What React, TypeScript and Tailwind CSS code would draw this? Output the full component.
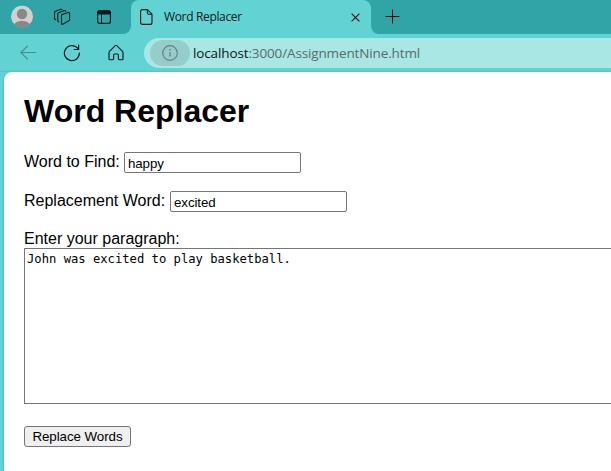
import React from "react";

function TabStrip() {
  return (
    <header className="flex h-[34px] bg-[#31a4a8]">
      <div className="flex w-[131px] shrink-0 items-start pl-[11px] pt-[5px]">
        <svg width="23" height="23" viewBox="0 0 23 23" fill="none">
          <defs>
            <clipPath id="avatar"><circle cx="11" cy="11.5" r="11" /></clipPath>
          </defs>
          <g clipPath="url(#avatar)">
            <circle cx="11" cy="11.5" r="11" fill="#d2d0ce" />
            <circle cx="11" cy="9" r="5.2" fill="#8a8886" />
            <ellipse cx="11" cy="21" rx="8.3" ry="5.3" fill="#8a8886" />
          </g>
        </svg>
        <svg className="ml-[19px] mt-[3px]" width="19" height="19" viewBox="0 0 19 19" fill="none" stroke="#0b1a1b" strokeWidth="1.1" strokeLinejoin="round" strokeLinecap="round">
          <path d="M9 6.6 L15.4 4.4 Q16.6 4.2 16.6 5.4 V11.5 Q16.6 12.4 15.8 12.8 L9.7 16.2 Q8.5 16.6 8.5 15.4 V7.5 Q8.5 6.8 9 6.6Z" />
          <path d="M5.8 13.9 Q4.8 13.7 4.8 12.8 V5.9 Q4.8 5.2 5.5 4.8 L11.4 2.6 Q12.6 2.3 12.8 3.3" />
          <path d="M2.6 11.6 Q1.5 11.4 1.5 10.5 V4.4 Q1.5 3.7 2.1 3.4 L7.6 1.3 Q8.7 1 9 1.7" />
        </svg>
        <svg className="ml-[25px] mt-[5px]" width="15" height="15" viewBox="0 0 15 15" fill="none" stroke="#0b1a1b">
          <rect x=".6" y=".6" width="12.8" height="12.8" rx="2" strokeWidth="1.2" />
          <path d="M1 1h12v3H1z" fill="#0b1a1b" />
          <path d="M4.5 4v9.4" />
        </svg>
      </div>
      <div className="relative flex w-[240px] shrink-0 items-start rounded-t-lg bg-[#62d2d3]">
        <svg className="absolute -left-2 bottom-0" width="8" height="8" viewBox="0 0 8 8"><path d="M8 0v8H0a8 8 0 0 0 8-8z" fill="#62d2d3" /></svg>
        <svg className="absolute -right-2 bottom-0" width="8" height="8" viewBox="0 0 8 8"><path d="M0 0v8h8a8 8 0 0 1-8-8z" fill="#62d2d3" /></svg>
        <svg className="ml-[9px] mt-[9px]" width="13" height="16" viewBox="0 0 13 16" fill="none" stroke="#101c1c" strokeWidth="1.1" strokeLinejoin="round">
          <path d="M2.5.6H7.4L12 5.2V13.4Q12 15.4 10 15.4H2.5Q.6 15.4 .6 13.4V2.5Q.6.6 2.5.6Z" />
          <path d="M7.4.6V4Q7.4 5.2 8.6 5.2H12" />
        </svg>
        <span className="ml-[11px] mt-[9px] w-[160px] whitespace-nowrap font-['Open_Sans','Noto_Sans',sans-serif] text-[12px] leading-4 tracking-[-0.34px] text-[#102020]">Word Replacer</span>
        <svg className="ml-[27px] mt-[13px]" width="9" height="9" viewBox="0 0 9 9" stroke="#102020" strokeWidth="1.2"><path d="m.6.6 7.8 7.8m0-7.8L.6 8.4" /></svg>
      </div>
      <svg className="ml-[14px] mt-[9px]" width="15" height="15" viewBox="0 0 15 15" stroke="#071515" strokeWidth="1"><path d="M7.5.5v14M.5 7.5h14" /></svg>
    </header>
  );
}

function Toolbar() {
  return (
    <nav className="flex h-[38px] items-start bg-[#62d2d3] pt-1 shadow-[inset_0_-3px_2px_-2px_#56c4c6]">
      <svg className="ml-5 mt-[7px] shrink-0" width="17" height="16" viewBox="0 0 17 16" fill="none" stroke="#438e90" strokeWidth="1.1"><path d="M16 7.5H.8M7.8.8.8 7.5l7 6.8" /></svg>
      <svg className="ml-[26px] mt-[6px] shrink-0" width="18" height="18" viewBox="0 0 18 18" fill="none" stroke="#0d1d1e" strokeWidth="1.2" strokeLinecap="round"><path d="M16.4 9a7.5 7.5 0 1 1-2.6-5.6L15.5 5M15.6 1.2V5.5H11.2" /></svg>
      <svg className="ml-[27px] mt-[6px] shrink-0" width="16" height="17" viewBox="0 0 16 17" fill="none" stroke="#0d1d1e" strokeWidth="1.15" strokeLinejoin="round"><path d="M1.5 7.3 7.2 1.7Q8 .9 8.8 1.7L14.5 7.3Q15 7.8 15 8.6V14.7Q15 15.7 14 15.7H11.3Q10.4 15.7 10.4 14.8V11Q10.4 10 9.4 10H6.6Q5.6 10 5.6 11V14.8Q5.6 15.7 4.7 15.7H2Q1 15.7 1 14.7V8.6Q1 7.8 1.5 7.3Z" /></svg>
      <div className="ml-5 flex h-[30px] grow items-center rounded-l-full bg-[#a8e7e4] pl-1.5">
        <div className="flex h-[26px] w-10 items-center justify-center rounded-full bg-[#95cdca]">
          <svg width="16" height="16" viewBox="0 0 16 16" fill="none" stroke="#667f80" strokeWidth="1.2"><circle cx="8" cy="8" r="7.3" /><path d="M8 7v4.5" /><circle cx="8" cy="4.7" r=".3" /></svg>
        </div>
        <span className="ml-[3px] whitespace-nowrap font-['Open_Sans','Noto_Sans',sans-serif] text-[13.5px] leading-5 tracking-[-0.13px] text-[#5a6b6c]"><span className="text-[#101818]">localhost</span>:3000/AssignmentNine.html</span>
      </div>
    </nav>
  );
}

const field = "h-[21px] w-[177px] rounded-[2px] border border-[#767676] bg-white px-[3px] pt-0.5 text-[13.333px] leading-4 tracking-[-0.1px] text-black outline-none";

export default function App() {
  return (
    <div className="h-[471px] w-[611px] overflow-hidden bg-[#62d2d3]">
      <TabStrip />
      <Toolbar />
      <main className="ml-1 h-[399px] rounded-tl-lg bg-white pl-5 pt-[21px] font-['Liberation_Sans',Arial,sans-serif] text-base leading-[18px] text-black shadow-[-1px_0_1px_#55bfc0]">
        <h1 className="h-[37px] text-[32px] font-bold leading-[37px]">Word Replacer</h1>
        <label className="mt-[22px] flex h-[21px] items-start">
          <span className="mr-[5px] mt-px w-[95px] whitespace-nowrap">Word to Find:</span>
          <input className={field} defaultValue="happy" />
        </label>
        <label className="mt-[18px] flex h-[21px] items-start">
          <span className="mr-[5px] mt-px w-[141px] whitespace-nowrap">Replacement Word:</span>
          <input className={field} defaultValue="excited" />
        </label>
        <label className="mt-[18px] block h-[18px]" htmlFor="paragraph">Enter your paragraph:</label>
        <textarea id="paragraph" spellCheck={false} className="block h-[156px] w-[620px] resize-none border border-[#767676] bg-white px-0.5 pb-0.5 pt-[3px] font-['DejaVu_Sans_Mono',monospace] text-[12.18px] leading-[15px] outline-none" defaultValue="John was excited to play basketball." />
        <button className="mt-[22px] block h-[21px] w-[107px] whitespace-nowrap rounded-[3px] border border-[#767676] bg-[#efefef] text-[13.333px] leading-[15px] tracking-[-0.05px]">Replace Words</button>
      </main>
    </div>
  );
}
